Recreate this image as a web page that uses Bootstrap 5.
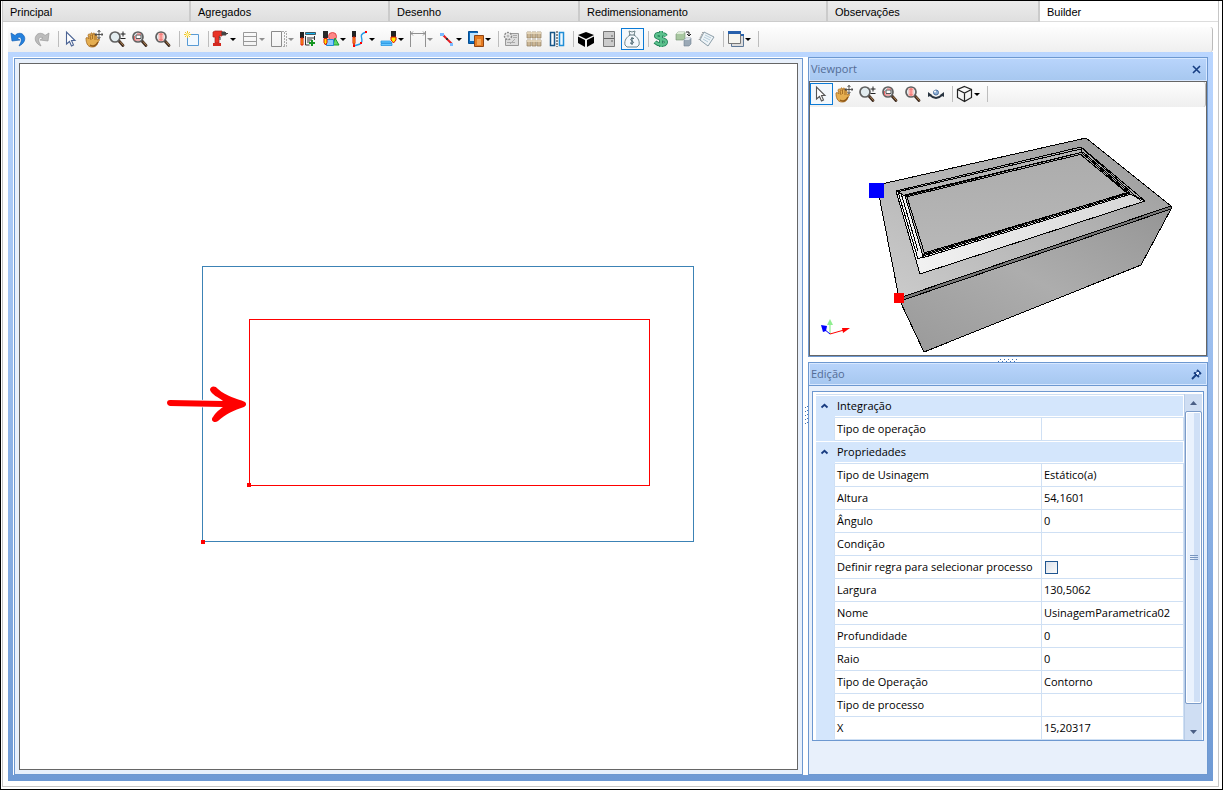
<!DOCTYPE html>
<html lang="pt-BR">
<head>
<meta charset="utf-8">
<meta name="viewport" content="width=device-width, initial-scale=1">
<title>Builder</title>
<link href="https://cdn.jsdelivr.net/npm/bootstrap@5.3.0/dist/css/bootstrap.min.css" rel="stylesheet">
<style>
:root{--line:#6d98d0;--soft:#e8f0fb;--row:#d4e6fc;--rule:#cfe0f4}
body{font:11px/16px "Open Sans","Noto Sans",sans-serif;color:#000;background:#fff}
button{font:inherit;color:inherit}
.window{border:1px solid #000;padding:0 3px 2px 1px}
.sheet{border:1px solid #c6c6c6;border-top:0;min-height:0}
.tabs{display:grid;grid-template-columns:188fr 199fr 190fr 248fr 212fr 178fr}
.tabs .nav-link{height:21px;padding:3px 7px;border:0;border-right:2px solid #cbcbcb;border-bottom:1px solid #ccc;border-radius:0;text-align:left;color:#000;background:linear-gradient(#ececec,#dfdfdf);font:11px/17px "Liberation Sans",sans-serif}
.tabs .nav-link.active{background:#fff;border-right:0;border-bottom-color:#ddd;color:#000}
.work{margin:5px;min-height:0}
.tools{height:25px;background:linear-gradient(#fdfdfd,#efefef);border-right:1px solid #bbb;border-radius:0 3px 3px 0;flex:none;padding-top:1px}
.tool{width:23px;height:22px;border:1px solid transparent;border-radius:0;padding:0;background:none;display:flex;align-items:center;flex:none}
.tool svg{width:18px;height:18px;margin:0 1px;flex:none;display:block}
.tool.drop{width:29px}
.tool.drop::after{content:"";border:3px solid transparent;border-top-color:#000;border-bottom:0;margin-left:-1px}
.tool.off.drop::after{border-top-color:#909090}
.tool.on{border-color:#0a7ad6;background:#f3f8fc}
.bar-gap{width:6px;flex:none;padding-top:3px}
.bar-gap::before{content:"";display:block;width:1px;height:16px;margin-left:4px;background:#bdbdbd}
.frame{background:linear-gradient(#bad6ff,#6f9ad4);padding:5px 5px 6px;min-height:0}
.inside{background:#fff;min-height:0}
.draw-pane{border:1px solid var(--line);margin:1px 0 0 1px;padding:4px;background:var(--soft);min-width:0}
.drawing{border:1px solid #666;background:#fff}
.v-split{width:5px;background:#fff}
.h-split{height:5px;background:#fff}
.side{width:400px;flex:none}
.pane{border:1px solid var(--line);background:var(--soft);min-height:0}
.pane-head{height:23px;margin:0;border:1px solid #d8e8ff;background:linear-gradient(#b8d4fb,#a7c8f0);color:#536c95;padding:0 0 0 1px}
.pane-head h2{font-size:11px;line-height:20px;margin:0;font-weight:400}
.icon-btn{border:0;background:none;padding:0;width:19px;height:20px;display:flex;align-items:center;justify-content:center}
.view{border:1px solid #666;height:275px;background:#fff}
.props-pane .pane-head{height:22px}
.props-box{border:1px solid var(--line);background:#fff;margin:5px 3px 0 3px;height:350px;padding:2px 1px 0 3px;overflow:hidden}
.props{border-collapse:separate;border-spacing:0;width:100%;border-top:1px solid var(--rule);table-layout:fixed}
.props th,.props td{height:23px;padding:0 2px;font-weight:400;border-bottom:1px solid var(--rule);border-right:1px solid var(--rule);line-height:22px;white-space:nowrap;text-align:left;vertical-align:middle}
.props .gut{background:var(--row);border-bottom-color:var(--row);padding:0;text-align:center}
.props .group th{background:var(--row);border-right:0}
.props .group .gut{box-shadow:inset 0 1px #fff;border-right:0}
.props .group th:last-child{box-shadow:inset -1px 0 #fff,inset 0 1px #fff,inset 0 -1px #fff}
.props .group button{border:0;background:none;padding:0;width:17px;height:20px;display:flex;align-items:center;justify-content:center}
.props input{appearance:none;display:block;width:13px;height:13px;margin:0 0 0 1px;border:1px solid #1f5590;background:linear-gradient(135deg,#dce2ec,#fafafa)}
.scroller{width:18px;flex:none;background:#cfdef3;border-left:1px solid #b9cde8}
.scroller button{border:0;background:none;height:17px;padding:0;display:flex;align-items:center;justify-content:center}
.thumb{height:293px;border:1px solid #7c9cc9;border-radius:2px;background:linear-gradient(90deg,#eaf2fd 50%,#d0e0f6 50%);box-shadow:inset 0 0 0 1px #fff}
</style>
</head>
<body>
<!-- shared toolbar icons -->
<svg class="d-none" aria-hidden="true">
<defs>
<linearGradient id="gold" x2="1" y2="1"><stop stop-color="#ffe09a"/><stop offset="1" stop-color="#b9731c"/></linearGradient>
<linearGradient id="metal" x2="1" y2="1"><stop stop-color="#fff"/><stop offset="1" stop-color="#b6c6c8"/></linearGradient>
</defs>
<symbol id="pointer" viewBox="0 0 18 18"><path d="M4.500 2v12l3-2.500 2 4.500 2-1-2-4.500h3.500z" fill="#fff" stroke="currentColor" stroke-width="1.100"/></symbol>
<symbol id="hand" viewBox="0 0 18 18"><path d="M1 8c1-1 2 0 3 1L3 5c1-2 2-1 3 1-1-4 1-4 2-1 0-3 2-3 2 1 1-2 2-1 2 1v3l2-1c1 1 0 2-1 3-1 4-3 5-6 5-5 0-6-5-6-9z" fill="#e5ae50" stroke="#a36a22" stroke-width=".8"/><path d="M5 6l1 4M7.500 5v4M10 6v4" stroke="#8c5516" stroke-width=".7" fill="none"/><path d="M5 15c3 2 6 1 8-3" stroke="#8c5516" stroke-width="1.500" fill="none"/><path d="M14 0v9M10 4.500h8M12.500 2L14 .5 15.500 2M12.500 7L14 8.500 15.500 7M11.500 3L10 4.500 11.500 6M16.500 3L18 4.500 16.500 6" stroke="#333" stroke-width=".8" fill="none"/></symbol>
<symbol id="lens" viewBox="0 0 18 18"><path d="M11 11l4 4.500" stroke="#3e2b20" stroke-width="2.800" stroke-linecap="round"/><path d="M12 11.500l3.500 4" stroke="#bc8d55" stroke-width="1"/><circle cx="7" cy="7" r="5" fill="#e2ecef" stroke="#606060" stroke-width="1.700"/></symbol>
<symbol id="zoompm" viewBox="0 0 18 18"><use href="#lens"/><path d="M12.500 4h5M15 1.500v5M12.500 8.500h5" stroke="#222" stroke-width="1"/></symbol>
<symbol id="zoomwin" viewBox="0 0 18 18"><use href="#lens"/><path d="M5 5h5v3.500H5z" fill="#fff" stroke="#555"/><path d="M3.500 6v4H9M6 4h4" stroke="#e66" fill="none"/></symbol>
<symbol id="zoomall" viewBox="0 0 18 18"><use href="#lens"/><path d="M4.500 3h5v8h-5z" fill="#ffb6b1"/><path d="M7 3.500v7M5.500 5L7 3.500 8.500 5M5.500 9L7 10.500 8.500 9" stroke="#ee6060" stroke-width=".8" fill="none"/></symbol>
<symbol id="caretup" viewBox="0 0 9 6"><path d="M1.500 4.500L4.500 1.800l3 2.700" fill="none" stroke="#183c80" stroke-width="1.800"/></symbol>
<symbol id="bit" viewBox="0 0 18 18"><path d="M1 1h5v7H1z" fill="#292929"/><path d="M2 8.500h3v4L3.500 15 2 12.500z" fill="#ffe600" stroke="#e01000" stroke-width="1"/></symbol>
</svg>

<div class="window vh-100 d-flex flex-column">
<div class="sheet flex-grow-1 d-flex flex-column">
<nav class="tabs flex-shrink-0" aria-label="Seções">
<button class="nav-link">Principal</button><button class="nav-link">Agregados</button><button class="nav-link">Desenho</button><button class="nav-link">Redimensionamento</button><button class="nav-link">Observações</button><button class="nav-link active">Builder</button>
</nav>
<main class="work flex-grow-1 d-flex flex-column">
<div class="tools d-flex align-items-start" role="toolbar" aria-label="Ferramentas">
<button class="tool" aria-label="Desfazer"><svg viewBox="0 0 18 18"><path d="M1 3l1 8 8-1-3-2c3-2 5 0 4 4l-2 4c5-2 7-7 5-10-2-4-7-3-9-.5z" fill="#2381de" stroke="#1460b5" stroke-width=".7"/></svg></button>
<button class="tool" aria-label="Refazer"><svg viewBox="0 0 18 18"><path d="M16 3l-1 8-8-1 3-2C7 6 5 8 6 12l2 4C3 14 1 9 3 6c2-4 7-3 9-.5z" fill="#bcbcbc" stroke="#9b9b9b" stroke-width=".7"/></svg></button>
<span class="bar-gap"></span>
<button class="tool" aria-label="Selecionar" style="color:#4c6495"><svg><use href="#pointer"/></svg></button>
<button class="tool" aria-label="Mover"><svg><use href="#hand"/></svg></button>
<button class="tool" aria-label="Zoom"><svg><use href="#zoompm"/></svg></button>
<button class="tool" aria-label="Zoom janela"><svg><use href="#zoomwin"/></svg></button>
<button class="tool" aria-label="Zoom total"><svg><use href="#zoomall"/></svg></button>
<span class="bar-gap"></span>
<button class="tool" aria-label="Novo"><svg viewBox="0 0 18 18"><path d="M4.500 4.500h11v11h-11z" fill="#f2f9ff" stroke="#589bd5"/><path d="M4.500 1v7M1 4.500h7M2 2l5 5M7 2L2 7" stroke="#f0c52c"/><circle cx="4.500" cy="4.500" r="1.500" fill="#fff49a"/></svg></button>
<span class="bar-gap"></span>
<button class="tool drop" aria-label="Furadeira"><svg viewBox="0 0 18 18"><path d="M1 2l2-1h7v5H7v7H3V7H1z" fill="#e93326" stroke="#a42420" stroke-width=".7"/><path d="M1 13h8v3H1z" fill="#d3291f"/><path d="M10 2h3l1 1v2h-4zM14 3.500h2" fill="#444" stroke="#444"/><path d="M7 7h1v3" stroke="#333" fill="none"/></svg></button>
<button class="tool drop off" aria-label="Divisões"><svg viewBox="0 0 18 18"><path d="M2.500 2.500h13v13h-13zM2.500 6.500h13M2.500 11.500h13" fill="none" stroke="#999"/></svg></button>
<button class="tool drop off" aria-label="Painel"><svg viewBox="0 0 18 18"><path d="M1.500 1.500h10v15h-10z" fill="none" stroke="#8b8b8b"/><path d="M12 1.500h4.500v15H12M14.500 2v14" fill="none" stroke="#aaa" stroke-dasharray="2 1"/></svg></button>
<button class="tool" aria-label="Adicionar usinagem"><svg viewBox="0 0 18 18"><path d="M1 2h4v6H1z" fill="#222"/><path d="M2 8h2v7H2z" fill="#fc2" stroke="#e01000"/><path d="M6.500 2.500h10v2h-10z" fill="#16b5f2" stroke="#222" stroke-width=".7"/><path d="M6.500 6v9h4M8 8h7M8 10h5M8 12h3M15.500 6v4" fill="none" stroke="#333"/><path d="M13 10v6M10 13h6" stroke="#159621" stroke-width="2"/></svg></button>
<button class="tool drop" aria-label="Formas"><svg viewBox="0 0 18 18"><circle cx="10.500" cy="6.500" r="4" fill="#f88" stroke="#df4848"/><path d="M13 8l4 7h-6z" fill="#5cd765" stroke="#189933"/><path d="M4.500 9.500h7v6h-7z" fill="#8bc9ff" stroke="#2089d6"/><use href="#bit"/></svg></button>
<button class="tool drop" aria-label="Curva"><svg viewBox="0 0 18 18"><path d="M1 1h4v6H1z" fill="#222"/><path d="M2 7h2v6l-1 2-1-2z" fill="#fc2" stroke="#e01000"/><path d="M15 2c-10 3 0 8-6 12-2 1-4 1-6 2" fill="none" stroke="#269be6" stroke-width="1.400"/><path d="M14 1h2v2h-2zM2 15h2v2H2zM9 12h2v2H9z" fill="#f00"/></svg></button>
<button class="tool drop" aria-label="Fresa"><svg viewBox="0 0 18 18"><path d="M11 1h5v6h-5z" fill="#222"/><path d="M11 7h5v3l-2.500 3L11 10z" fill="#fff000" stroke="#e01000"/><path d="M1 11h9l2 2h-11zM1 13.500h11v2H1z" fill="#68c8ff" stroke="#168ce1" stroke-width=".7"/></svg></button>
<button class="tool drop off" aria-label="Cota"><svg viewBox="0 0 18 18"><path d="M1.500 1v16M16.500 1v16M2 3.500h14M4 1.500l-2 2 2 2M14 1.500l2 2-2 2" fill="none" stroke="#919191"/></svg></button>
<button class="tool drop" aria-label="Linha"><svg viewBox="0 0 18 18"><path d="M4 4l10 10" stroke="#e21d23" stroke-width="2"/><path d="M2 3h4v3H2zM12 13h3v3h-3z" fill="#78baff"/><path d="M8 8h2v2H8z" fill="#333"/></svg></button>
<button class="tool drop" aria-label="Copiar"><svg viewBox="0 0 18 18"><path d="M1.500 1.500h9v12h-9z" fill="#0a6abe" stroke="#064f93"/><path d="M3 3h4v8H3zM7 3h4v3H7z" fill="#bfe5ff"/><path d="M7.500 5.500h9v11h-9z" fill="#e47a21" stroke="#8e4515"/><path d="M10 9h4v6h-4z" fill="#f4a657"/></svg></button>
<span class="bar-gap"></span>
<button class="tool" aria-label="Engrenagem"><svg viewBox="0 0 18 18"><path d="M3.500 3.500h13v12h-13z" fill="#ddd" stroke="#999"/><circle cx="6" cy="6" r="3.500" fill="#eee" stroke="#888" stroke-width="1.500" stroke-dasharray="2 1"/><circle cx="6" cy="6" r="1.500" fill="#bbb"/><path d="M11 5.500h4M11 7.500h4M5 12.500h8M13 9l-5 5" stroke="#aaa"/></svg></button>
<button class="tool" aria-label="Peças"><svg viewBox="0 0 18 18"><g fill="#cbb797" stroke="#94805f" stroke-width=".7"><path d="M2 2h4v6H2zM7 2h4v6H7zM12 2h4v6h-4zM2 10h4v6H2zM7 10h4v6H7zM12 10h4v6h-4z"/></g><path d="M2 3h14M2 11h14" stroke="#eee1c6" stroke-width="1.500"/></svg></button>
<button class="tool" aria-label="Espelhar"><svg viewBox="0 0 18 18"><path d="M2.500 2.500h4v13h-4z" fill="#fff" stroke="#195687" stroke-width="1.500"/><path d="M11.500 2.500h4v13h-4z" fill="#eef8ff" stroke="#208ed7" stroke-width="1.500"/><path d="M9 1v16" stroke="#222" stroke-dasharray="2 1"/></svg></button>
<span class="bar-gap"></span>
<button class="tool" aria-label="Cubo"><svg viewBox="0 0 18 18"><path d="M1 5l8-3 8 3-8 4zM1 6.500l7 3.500v7l-7-4zM17 6.500L10 10v7l7-4z"/></svg></button>
<button class="tool" aria-label="Módulo"><svg viewBox="0 0 18 18"><path d="M3.500 1.500h11v15h-11z" fill="#ccc" stroke="#777"/><path d="M4 8.500h10M11 6h2M11 11h2" stroke="#666"/></svg></button>
<button class="tool on" aria-label="Custos" aria-pressed="true"><svg viewBox="0 0 18 18"><path d="M6 1l3 1 3-1-1 4c3 2 6 5 5 10l-2 2H4l-2-2C1 10 4 7 7 5z" fill="url(#metal)" stroke="#6f858a"/><path d="M6 5h6" stroke="#627980"/><path d="M11 8.500C8 7.500 6.500 10 9 11s2 3-2 2M9 7v8" fill="none" stroke="#415d66"/></svg></button>
<span class="bar-gap"></span>
<button class="tool" aria-label="Preço"><svg viewBox="0 0 18 18"><path d="M14 6C12 3 4 3 4 6s10 2 10 6-8 3-11 0M9 1v16" fill="none" stroke="#217d56" stroke-width="4"/><path d="M14 6C12 3 4 3 4 6s10 2 10 6-8 3-11 0M9 1v16" fill="none" stroke="#5bc28d" stroke-width="2.400"/></svg></button>
<button class="tool" aria-label="Substituir"><svg viewBox="0 0 18 18"><path d="M1 4l2-2h7v6l-2 2H1z" fill="#a8c7a0" stroke="#718e70" stroke-width=".6"/><path d="M1 4h7l2-2H3z" fill="#ddebd7"/><path d="M9 10l2-2h5v6l-2 2H9z" fill="#9ba9b6" stroke="#718291" stroke-width=".6"/><path d="M9 10h5l2-2h-5z" fill="#dbe2ea"/><path d="M11 2h3v4M12 4l2 2 2-2" stroke="#222" fill="none"/></svg></button>
<button class="tool" aria-label="Lista"><svg viewBox="0 0 18 18"><path d="M6 2l10 5-6 9-8-6z" fill="#eef4f7" stroke="#8b9da8"/><path d="M7 5l6 3M6 7l6 3M5 9l5 3" stroke="#99b7cb" stroke-width=".7"/><path d="M5 2L1 10" stroke="#777" stroke-dasharray="1 1"/></svg></button>
<span class="bar-gap"></span>
<button class="tool drop" aria-label="Janelas"><svg viewBox="0 0 18 18"><path d="M4.500 4.500h12v12h-12z" fill="#ddd" stroke="#5d7898"/><path d="M1.500 1.500h12v12h-12z" fill="#f5f5f0" stroke="#777"/><path d="M1 1h13v3H1zM14 4h3v2h-3z" fill="#2761ac"/></svg></button>
<span class="bar-gap"></span>
</div>

<div class="frame flex-grow-1 d-flex">
<div class="inside flex-grow-1 d-flex w-100">
<section class="draw-pane flex-grow-1 d-flex" aria-label="Desenho">
<div class="drawing flex-grow-1">
<svg class="d-block w-100 h-100" viewBox="20 64 777 705" role="img" aria-label="Desenho da peça">
<g fill="none" shape-rendering="crispEdges"><path d="M202.500 266.500h491v275h-491z" stroke="#3c82b5"/><path d="M249.500 319.500h400v166h-400z" stroke="#f00"/></g>
<path d="M170 400l53 1c-5-4-11-6-13-11 0-4 5-5 8-1 9 8 18 9 27 13 2 2 1 4-1 5-10 3-18 7-26 14-4 3-8-1-5-4 3-5 6-7 10-10l-53-1c-4-1-4-6 0-6z" fill="#f00" stroke="#fff" stroke-width="1.500" paint-order="stroke"/>
<path d="M247 483h4v4h-4zM201 540h4v4h-4z" fill="#f00"/>
</svg>
</div>
</section>
<div class="v-split d-flex align-items-center justify-content-center flex-shrink-0"><svg width="4" height="20"><path d="M1.500 1v18M3.500 0v19" stroke="#3f70b5" stroke-dasharray="1 3"/></svg></div>
<div class="side d-flex flex-column">
<section class="pane flex-shrink-0">
<header class="pane-head d-flex justify-content-between"><h2>Viewport</h2><button class="icon-btn" aria-label="Fechar"><svg width="9" height="9"><path d="M1 1l7 7M8 1L1 8" stroke="#173e82" stroke-width="1.600"/></svg></button></header>
<div class="view d-flex flex-column">
<div class="tools d-flex align-items-start" role="toolbar" aria-label="Visualização">
<button class="tool on" aria-label="Selecionar" style="color:#555"><svg><use href="#pointer"/></svg></button>
<button class="tool" aria-label="Mover"><svg><use href="#hand"/></svg></button>
<button class="tool" aria-label="Zoom"><svg><use href="#zoompm"/></svg></button>
<button class="tool" aria-label="Zoom janela"><svg><use href="#zoomwin"/></svg></button>
<button class="tool" aria-label="Zoom total"><svg><use href="#zoomall"/></svg></button>
<button class="tool" aria-label="Girar"><svg viewBox="0 0 18 18"><path d="M3 10c4 4 8 4 12 0" fill="none" stroke="#293440" stroke-width="1.800"/><path d="M1 12V7l4 3zM17 12V7l-4 3z" fill="#293440"/><circle cx="9" cy="7.500" r="2.500" fill="#8daed4" stroke="#4b71a0"/><circle cx="8" cy="6.500" r="1" fill="#fff"/></svg></button>
<span class="bar-gap"></span>
<button class="tool drop" aria-label="Vistas"><svg viewBox="0 0 18 18"><path d="M8.500 1.500l7 3v8l-7 4-7-4v-8zM1.500 4.500l7 3.500 7-3.500M8.500 8v8" fill="none" stroke="#222" stroke-width="1.200"/></svg></button>
<span class="bar-gap"></span>
</div>
<svg class="flex-grow-1 w-100 d-block" viewBox="810 107 396 248" role="img" aria-label="Peça em 3D">
<defs><linearGradient id="top" x1="0" y1="1" x2="1" y2="0"><stop stop-color="#ccc"/><stop offset=".6" stop-color="#b0b0b0"/><stop offset="1" stop-color="#969696"/></linearGradient><linearGradient id="front" x1="0" y1="1" x2="1" y2="0"><stop stop-color="#999"/><stop offset=".5" stop-color="#adadad"/><stop offset="1" stop-color="#959595"/></linearGradient><linearGradient id="panel" x2="0" y2="1"><stop stop-color="#acacac"/><stop offset="1" stop-color="#b8b8b8"/></linearGradient><linearGradient id="lip" x2="1"><stop stop-color="#f4f4f4"/><stop offset="1" stop-color="#d6d6d6"/></linearGradient></defs>
<g stroke="#000" stroke-linejoin="round" shape-rendering="crispEdges">
<path d="M877 185L1086 138l85 68-272 92z" fill="url(#top)"/>
<path d="M900 301l271-92-30 56-217 87z" fill="url(#front)"/>
<path d="M899 298l272-92v3l-271 92z" fill="#777"/>
<path d="M896 191l185-44 64 54-225 73z" fill="url(#lip)"/>
<path d="M896 191l185-44 2 6-178 43z" fill="#b5b5b5"/>
<path d="M1081 147l64 54-15-7-49-42z" fill="#b0b0b0"/>
<path d="M905 196l178-44 47 41-207 63z" fill="url(#panel)"/>
<path d="M897 192l184-43M905 195l178-43M906 197l176-43M1082 153l47 41M1080 154l47 39M1083 149l58 52M907 197l18 58M898 192l20 67M901 193l17 58M922 255l207-63M922 258l209-64M924 253l206-61M918 259l6-3" fill="none"/>
</g>
<path d="M869 183h15v15h-15z" fill="#00f"/><path d="M894 293h10v10h-10z" fill="#f00"/>
<path d="M830 334v-11" stroke="#90ee90" stroke-width="1.200"/><path d="M827 325l3-6 3 6z" fill="#90ee90"/><path d="M830 334l14-4" stroke="red"/><path d="M842 328l8 0-7 5z" fill="red"/><path d="M830 334l-6-5" stroke="#00f"/><path d="M821 325l6 1-1 5-3 1z" fill="#00f"/>
</svg>
</div>
</section>
<div class="h-split text-center d-flex align-items-center justify-content-center flex-shrink-0"><svg width="20" height="4"><path d="M2 1.500h18M0 3.500h18" stroke="#3f70b5" stroke-dasharray="1 3"/></svg></div>
<section class="pane props-pane flex-grow-1">
<header class="pane-head d-flex justify-content-between"><h2>Edição</h2><button class="icon-btn" aria-label="Fixar painel"><svg width="11" height="11" viewBox="0 0 11 11"><path d="M6 1l4 4M3 3.500l5 4.500M1 10l4-4" stroke="#173e82" stroke-width="1.800"/><path d="M7 2l2 2-2 3-3-3z" fill="#dceaff" stroke="#173e82"/></svg></button></header>
<div class="border-top" style="--bs-border-color:#6d98d0"></div>
<div class="props-box d-flex">
<div class="flex-grow-1">
<table class="props">
<colgroup><col style="width:19px"><col style="width:207px"><col></colgroup>
<tbody>
<tr class="group"><td class="gut"><button aria-label="Recolher Integração"><svg width="9" height="6"><use href="#caretup"/></svg></button></td><th colspan="2">Integração</th></tr>
<tr><td class="gut"></td><th>Tipo de operação</th><td></td></tr>
<tr class="group"><td class="gut"><button aria-label="Recolher Propriedades"><svg width="9" height="6"><use href="#caretup"/></svg></button></td><th colspan="2">Propriedades</th></tr>
<tr><td class="gut"></td><th>Tipo de Usinagem</th><td>Estático(a)</td></tr>
<tr><td class="gut"></td><th>Altura</th><td>54,1601</td></tr>
<tr><td class="gut"></td><th>Ângulo</th><td>0</td></tr>
<tr><td class="gut"></td><th>Condição</th><td></td></tr>
<tr><td class="gut"></td><th><label for="rule">Definir regra para selecionar processo</label></th><td><input type="checkbox" id="rule"></td></tr>
<tr><td class="gut"></td><th>Largura</th><td>130,5062</td></tr>
<tr><td class="gut"></td><th>Nome</th><td>UsinagemParametrica02</td></tr>
<tr><td class="gut"></td><th>Profundidade</th><td>0</td></tr>
<tr><td class="gut"></td><th>Raio</th><td>0</td></tr>
<tr><td class="gut"></td><th>Tipo de Operação</th><td>Contorno</td></tr>
<tr><td class="gut"></td><th>Tipo de processo</th><td></td></tr>
<tr><td class="gut"></td><th>X</th><td>15,20317</td></tr>
</tbody>
</table>
</div>
<div class="scroller d-flex flex-column">
<button aria-label="Rolar para cima"><svg width="7" height="4"><path d="M0 4l3.500-4L7 4z" fill="#4b5f85"/></svg></button>
<div class="thumb d-flex align-items-center justify-content-center"><svg width="8" height="6"><path d="M0 .5h8M0 2.500h8M0 4.500h8" stroke="#7896c0"/></svg></div>
<button class="mt-auto" aria-label="Rolar para baixo"><svg width="7" height="4"><path d="M0 0l3.500 4L7 0z" fill="#4b5f85"/></svg></button>
</div>
</div>
</section>
</div>
</div>
</div>
</main>
</div>
</div>
<script src="https://cdn.jsdelivr.net/npm/bootstrap@5.3.0/dist/js/bootstrap.bundle.min.js"></script>
</body>
</html>
